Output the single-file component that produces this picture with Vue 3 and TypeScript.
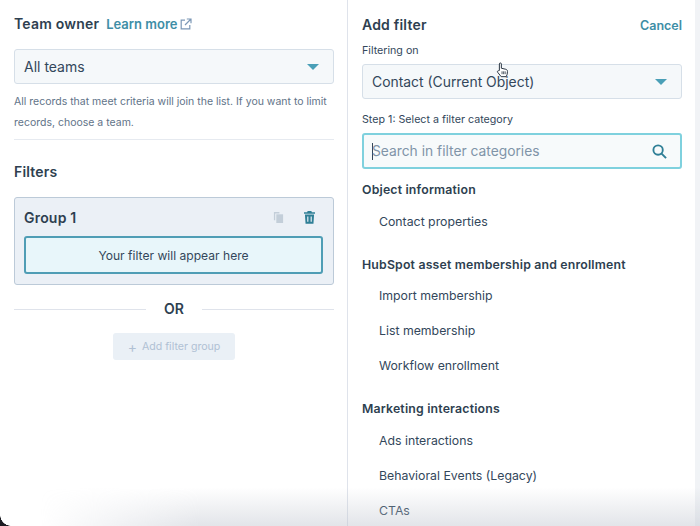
<script setup lang="ts">
const sections: { title: string; items: string[] }[] = [
  { title: 'Object information', items: ['Contact properties'] },
  { title: 'HubSpot asset membership and enrollment', items: ['Import membership', 'List membership', 'Workflow enrollment'] },
  { title: 'Marketing interactions', items: ['Ads interactions', 'Behavioral Events (Legacy)', 'CTAs'] },
]
</script>

<template>
  <div class="page">
    <section class="left">
      <div class="owner-head">
        <h2 class="h">Team owner</h2>
        <a class="learn">Learn more
          <svg class="ext" viewBox="0 0 12 12" width="12" height="12" fill="none" stroke="#7c98b6" stroke-width="1.2">
            <path d="M5 2.2H1.2v8.6h8.6V7" />
            <path d="M6.8 1h4.2v4.2M11 1L5 7" />
          </svg>
        </a>
      </div>
      <div class="select"><span>All teams</span><i class="caret"></i></div>
      <p class="help">All records that meet criteria will join the list. If you want to limit records, choose a team.</p>
      <hr class="rule" />
      <h2 class="h filters">Filters</h2>
      <div class="group">
        <div class="group-head">
          <strong>Group 1</strong>
          <div class="group-icons">
            <svg viewBox="0 0 12 14" width="11" height="13" fill="#c3ced9">
              <path d="M1 1h6v1.5H2.4V10H1z" />
              <path d="M3.6 3.5H11V13H3.6z" />
            </svg>
            <svg viewBox="0 0 12 14" width="11" height="13" fill="#2f7f96">
              <path d="M4 0h4l.6 1.4H12v1.5H0V1.400h3.400z" />
              <path fill-rule="evenodd" d="M1 3.800h10l-.7 10H1.700zM3.500 6v5.600h1.300V6zm3.700 0v5.600h1.300V6z" />
            </svg>
          </div>
        </div>
        <div class="placeholder">Your filter will appear here</div>
      </div>
      <div class="or"><span>OR</span></div>
      <div class="add-wrap">
        <div class="add"><span class="plus">+</span> Add filter group</div>
      </div>
    </section>

    <section class="right">
      <div class="add-head">
        <h2 class="h">Add filter</h2>
        <a class="cancel">Cancel</a>
      </div>
      <label class="lbl">Filtering on</label>
      <div class="select sel-r"><span>Contact (Current Object)</span><i class="caret"></i></div>
      <label class="lbl step">Step 1: Select a filter category</label>
      <div class="search">
        <span class="cursor-bar"></span>
        <span class="ph">Search in filter categories</span>
        <svg viewBox="0 0 16 16" width="15" height="15" fill="none" stroke="#2f7f96" stroke-width="2">
          <circle cx="6.500" cy="6.500" r="5" />
          <path d="M10.200 10.200L15 15" />
        </svg>
      </div>
      <div v-for="(s, i) in sections" :key="s.title" class="cat" :class="{ tight: i === 1 }">
        <h3>{{ s.title }}</h3>
        <div v-for="it in s.items" :key="it" class="item">{{ it }}</div>
      </div>
    </section>

    <div class="strip"></div>
    <div class="fade"></div>
    <div class="corner"></div>
    <svg class="hand" viewBox="0 0 14 18" width="13" height="16" fill="#fff" stroke="#26323f" stroke-width="1.100">
      <path d="M3.500 9.500V2.200a1.100 1.100 0 0 1 2.200 0V7l5 1.200c1.300.4 2 1.200 1.900 2.400l-.4 3.400-1 2.500H5.500L1.500 11.500c-.8-1 .6-2.300 1.500-1.500z" />
      <path d="M6.500 10.500v3.200M8.300 10.500v3.200M10 10.500v3.200" stroke-width="0.900" />
    </svg>
  </div>
</template>

<style>
html, body { margin: 0; background: #fff; }
</style>

<style scoped>
.page {
  position: relative;
  width: 700px;
  height: 526px;
  overflow: hidden;
  display: flex;
  background: #fff;
  color: #33475b;
  font-family: "Inter", "Liberation Sans", sans-serif;
}
.left {
  width: 348px;
  box-sizing: border-box;
  padding: 15px 13px 0 14px;
  border-right: 1px solid #dfe3eb;
  flex: none;
}
.right {
  width: 348px;
  box-sizing: border-box;
  padding: 16px 14px 0 14px;
  flex: none;
}
.h {
  margin: 0;
  font-size: 14px;
  font-weight: 600;
  line-height: 18px;
  color: #2e3f50;
  letter-spacing: 0.2px;
}
.owner-head { display: flex; align-items: center; gap: 7px; }
.learn {
  display: flex;
  align-items: center;
  gap: 2px;
  font-size: 13px;
  font-weight: 600;
  color: #3e8ea6;
}
.select {
  display: flex;
  align-items: center;
  justify-content: space-between;
  box-sizing: border-box;
  height: 35px;
  margin-top: 16px;
  padding: 0 14px 0 9px;
  border: 1px solid #d6dfe8;
  border-radius: 3px;
  background: #f5f8fa;
  font-size: 14px;
  color: #33475b;
}
.caret {
  width: 0;
  height: 0;
  border-left: 6px solid transparent;
  border-right: 6px solid transparent;
  border-top: 6px solid #4a9fb7;
}
.help {
  margin: 7px 0 0;
  font-size: 10.500px;
  line-height: 21px;
  color: #5f7388;
}
.rule { margin: 6px 0 0; border: none; border-top: 1px solid #e6eaf0; }
.filters { margin-top: 23px; }
.group {
  margin-top: 16px;
  box-sizing: border-box;
  height: 88px;
  padding: 0 10px 0 9px;
  border: 1px solid #bccad8;
  border-radius: 3px;
  background: #ebf0f6;
}
.group-head { display: flex; align-items: center; justify-content: space-between; height: 38px; }
.group-head strong { font-size: 14px; font-weight: 600; color: #2e3f50; letter-spacing: 0.2px; }
.group-icons { display: flex; gap: 20px; align-items: center; padding-right: 8px; }
.placeholder {
  height: 38px;
  box-sizing: border-box;
  display: flex;
  align-items: center;
  justify-content: center;
  border: 2px solid #4f9db5;
  border-radius: 3px;
  background: #e8f6fa;
  font-size: 12.100px;
  color: #33475b;
}
.or {
  display: flex;
  align-items: center;
  gap: 18px;
  margin-top: 15px;
  font-size: 14px;
  font-weight: 600;
  color: #2e3f50;
  line-height: 18px;
}
.or::before, .or::after { content: ""; flex: 1; border-top: 1px solid #dfe3eb; }
.add-wrap { display: flex; justify-content: center; margin-top: 15px; }
.add {
  width: 122px;
  height: 27px;
  box-sizing: border-box;
  display: flex;
  align-items: center;
  justify-content: center;
  gap: 5px;
  border-radius: 3px;
  background: #eaf0f6;
  font-size: 10.600px;
  color: #b0c1d4;
}
.plus { font-size: 14px; line-height: 1; }
.add-head { display: flex; justify-content: space-between; align-items: center; }
.cancel { font-size: 12.500px; font-weight: 600; color: #3e8ea6; }
.lbl { display: block; font-size: 10.700px; line-height: 14px; color: #33475b; }
.add-head + .lbl { margin-top: 10px; }
.sel-r { margin-top: 6px; height: 35px; font-size: 13.900px; }
.step { margin-top: 14px; }
.search {
  display: flex;
  align-items: center;
  box-sizing: border-box;
  height: 36px;
  margin-top: 6px;
  padding: 0 13px 0 8px;
  border: 2px solid #7fd1de;
  border-radius: 3px;
  background: #f7fafb;
}
.cursor-bar { width: 1px; height: 17px; background: #33475b; flex: none; margin-right: -1px; }
.ph { flex: 1; font-size: 13.800px; color: #8094a8; }
.cat { margin-top: 13px; }
.cat + .cat { margin-top: 18px; }
.cat h3 {
  margin: 0;
  font-size: 12.300px;
  font-weight: 600;
  line-height: 16px;
  color: #2e3f50;
  letter-spacing: 0.18px;
}
.item {
  height: 35px;
  display: flex;
  align-items: center;
  padding-left: 17px;
  font-size: 12.300px;
  color: #33475b;
}
.cat h3 + .item { margin-top: 6px; }
.cat.tight h3 + .item { margin-top: 5px; }
.strip {
  position: absolute;
  top: 0;
  right: 0;
  width: 5px;
  height: 100%;
  background: #f1f3f6;
}
.fade {
  position: absolute;
  left: 0;
  right: 0;
  bottom: 0;
  height: 38px;
  background: linear-gradient(to bottom, rgba(190, 195, 205, 0), rgba(190, 195, 205, 0.45));
  -webkit-mask-image: linear-gradient(to right, transparent 40px, #000 200px);
  mask-image: linear-gradient(to right, transparent 40px, #000 200px);
  pointer-events: none;
}
.corner {
  position: absolute;
  left: 0;
  bottom: 0;
  width: 11px;
  height: 11px;
  background: radial-gradient(circle at 100% 0, transparent 10.500px, #1c1c22 11px);
}
.hand { position: absolute; left: 496px; top: 62px; }
</style>
